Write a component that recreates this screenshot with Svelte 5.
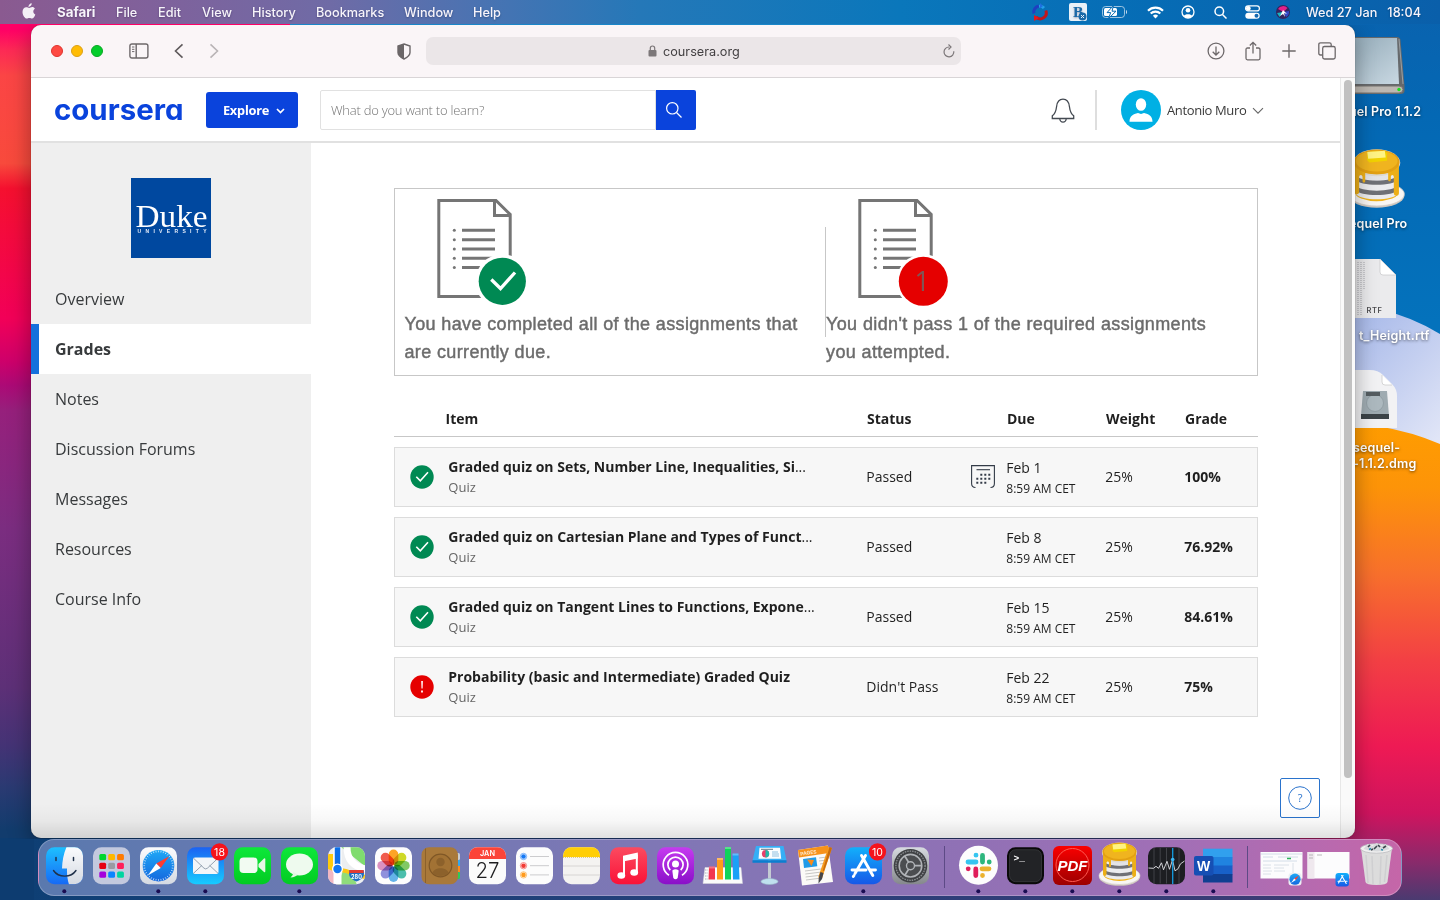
<script>
  const menus = [
    { label: 'Safari', w: 59, bold: true },
    { label: 'File', w: 42 },
    { label: 'Edit', w: 44 },
    { label: 'View', w: 50 },
    { label: 'History', w: 64 },
    { label: 'Bookmarks', w: 88 },
    { label: 'Window', w: 69 },
    { label: 'Help', w: 40 }
  ];
  const nav = ['Overview', 'Grades', 'Notes', 'Discussion Forums', 'Messages', 'Resources', 'Course Info'];
  const rows = [
    { title: 'Graded quiz on Sets, Number Line, Inequalities, Si', cut: true, ok: true, status: 'Passed', due: 'Feb 1', grade: '100%', cal: true },
    { title: 'Graded quiz on Cartesian Plane and Types of Funct', cut: true, ok: true, status: 'Passed', due: 'Feb 8', grade: '76.92%' },
    { title: 'Graded quiz on Tangent Lines to Functions, Expone', cut: true, ok: true, status: 'Passed', due: 'Feb 15', grade: '84.61%' },
    { title: 'Probability (basic and Intermediate) Graded Quiz', cut: false, ok: false, status: "Didn't Pass", due: 'Feb 22', grade: '75%' }
  ];
  const dock = [
    'finder', 'launchpad', 'safari', 'mail', 'facetime', 'messages', 'maps', 'photos', 'contacts', 'calendar',
    'reminders', 'notes', 'music', 'podcasts', 'numbers', 'keynote', 'pages', 'appstore', 'settings', 'sep',
    'slack', 'terminal', 'pdf', 'sequel', 'stocks', 'word', 'sep', 'win1', 'win2', 'trash'
  ];
  const running = ['finder', 'safari', 'mail', 'messages', 'appstore', 'slack', 'terminal', 'pdf', 'sequel', 'stocks', 'word'];
  const padColors = ['#00d62f', '#ffb800', '#ff7a00', '#e60012', '#9a9aa2', '#ff1f5a', '#a400dc', '#0a84ff', '#00d5a0'];
  const petals = ['#ff9500', '#c8d400', '#6cc24a', '#2bb5a0', '#4aa8e8', '#7d7fd8', '#d77fb8', '#f0402f'];
  const ticks = Array.from({ length: 36 }, (_, i) => i * 10);
</script>

{#snippet pancakes()}
  <ellipse cx="23.500" cy="37.800" rx="20.500" ry="9" fill="#cdc6be" />
  <ellipse cx="23.500" cy="36.700" rx="20.500" ry="8.800" fill="#f8f6f3" stroke="#d5cfc8" stroke-width=".6" />
  <path d="M8 33q-2 5 4 7 11 4 23 0 6-2 4-7z" fill="#f0b31a" />
  <path d="M8 14h31v22c-2 6-29 6-31 0z" fill="#ececee" />
  <path d="M8 22.500c2 5.500 29 5.500 31 0v3.200c-2 5.500-29 5.500-31 0z" fill="#707176" />
  <path d="M8 30c2 5.500 29 5.500 31 0v3.200c-2 5.500-29 5.500-31 0z" fill="#707176" />
  <path d="M13 20h21v5q-10 3-21 0z" fill="#e3e3e6" />
  <ellipse cx="23.500" cy="13.500" rx="17.500" ry="10" fill="#dcd8d2" />
  <path d="M7 13v22c0 2.500 3.500 2.500 3.500 0V24c0-2 2.500-2 2.500 0v3c0 1.500 2 1.500 2 0v-6q9 2 17 0v5c0 1.500 2 1.500 2 0v-2c0-2 2.200-2 2.200 0v12c0 2.500 3.800 2.500 3.800 0V13z" fill="#edaf17" />
  <ellipse cx="23.500" cy="12.800" rx="17" ry="9.200" fill="#e3a013" />
  <ellipse cx="23.500" cy="12.200" rx="15.500" ry="7.800" fill="#f0b41f" />
  <path d="M16.500 5.500l13-1 1.700 1.500v6l-13 1.200-1.700-1.500z" fill="#f2d200" />
  <path d="M16.500 5.500l13-1 .7 5-13 1z" fill="#fff384" />
{/snippet}

{#snippet compass(cx, cy, r)}
  <circle {cx} {cy} {r} fill="url(#gSaf)" />
  {#each ticks as a}
    <line x1={cx} y1={cy - r + 0.6} x2={cx} y2={cy - r + 2.4} stroke="#fff" stroke-width=".6" transform="rotate({a} {cx} {cy})" />
  {/each}
  <path d="M{cx + r * 0.68} {cy - r * 0.6}L{cx - r * 0.14} {cy - r * 0.14}L{cx + r * 0.14} {cy + r * 0.14}z" fill="#ff3b30" />
  <path d="M{cx - r * 0.68} {cy + r * 0.62}L{cx - r * 0.14} {cy - r * 0.14}L{cx + r * 0.14} {cy + r * 0.14}z" fill="#fff" />
{/snippet}

{#snippet docIcon()}
  <g fill="none" stroke="#757575" stroke-width="3">
    <path d="M1.800 1.500H59L73.200 15.500V97.500H1.800z" />
    <path d="M57.500 1.500V16.500H73" />
    <path d="M25 31.300h33M25 40.700h33M25 50h33M25 59.300h33M25 68.600h33" />
  </g>
  {#each [31.300, 40.700, 50, 59.300, 68.600] as y}
    <circle cx="17.300" cy={y} r="1.500" fill="#757575" />
  {/each}
{/snippet}

<div class="desktop">
  <svg class="wall" width="1440" height="900" viewBox="0 0 1440 900" aria-hidden="true">
    <defs>
      <linearGradient id="wl" x1="0" y1="0" x2="0" y2="1">
        <stop offset=".035" stop-color="#ff0066" /><stop offset=".06" stop-color="#fd2a55" /><stop offset=".09" stop-color="#fb4545" />
        <stop offset=".195" stop-color="#f84a3c" /><stop offset=".225" stop-color="#f5102f" /><stop offset=".38" stop-color="#f20058" />
        <stop offset=".43" stop-color="#cf006a" /><stop offset=".46" stop-color="#ac0a76" /><stop offset=".49" stop-color="#96207c" />
        <stop offset=".63" stop-color="#7b2d80" /><stop offset=".82" stop-color="#5d3077" /><stop offset=".89" stop-color="#443375" />
        <stop offset=".94" stop-color="#2a3a72" /><stop offset=".99" stop-color="#123c6d" />
      </linearGradient>
      <linearGradient id="wr" x1="0" y1="0" x2="0" y2="1">
        <stop offset="0" stop-color="#0a62ae" /><stop offset=".25" stop-color="#0468b4" /><stop offset=".7" stop-color="#0472bc" />
      </linearGradient>
      <linearGradient id="wo" x1="0" y1="0" x2="0" y2="1">
        <stop offset="0" stop-color="#ff9d00" /><stop offset=".14" stop-color="#fd9408" /><stop offset=".32" stop-color="#f8702c" />
        <stop offset=".5" stop-color="#f34044" /><stop offset=".68" stop-color="#ee1a54" /><stop offset=".82" stop-color="#cf145f" />
        <stop offset=".92" stop-color="#8a2a6b" /><stop offset="1" stop-color="#4a3a70" />
      </linearGradient>
      <linearGradient id="wp" x1="0" y1="0" x2="1" y2="1">
        <stop offset="0" stop-color="#93a9e4" /><stop offset="1" stop-color="#e4e8f8" />
      </linearGradient>
      <linearGradient id="wb" x1="0" y1="0" x2="1" y2="0">
        <stop offset="0" stop-color="#0d3f74" /><stop offset=".5" stop-color="#26407a" /><stop offset=".85" stop-color="#383c76" /><stop offset="1" stop-color="#4a3a70" />
      </linearGradient>
    </defs>
    <rect width="1440" height="900" fill="url(#wb)" />
    <rect width="290" height="838" fill="url(#wl)" />
    <rect y="838" width="34" height="62" fill="#0d3c70" />
    <rect x="290" width="1000" height="60" fill="#1a86c8" />
    <rect x="1290" width="150" height="460" fill="url(#wr)" />
    <path d="M1300 300Q1385 300 1440 334V450H1300z" fill="url(#wp)" />
    <path d="M1300 420Q1385 420 1440 444V900H1300z" fill="url(#wo)" />
  </svg>

  <header class="menubar">
    <svg class="apple" width="14" height="17" viewBox="0 0 14 17">
      <path fill="#f4f0f6" d="M9.700.2c.1 1-.3 1.900-.9 2.600-.6.700-1.400 1.100-2.300 1.100-.1-.9.300-1.900.9-2.500C8 .7 8.900.3 9.700.2zM12.900 5.800c-1 .6-1.600 1.600-1.600 2.700 0 1.300.8 2.400 2 2.900-.6 1.900-1.900 4.200-3.300 4.200-.9 0-1.400-.6-2.600-.6s-1.700.6-2.500.6C3.300 15.600.5 12.500.5 8.900c0-2.900 1.800-4.700 3.800-4.700 1.200 0 2 .7 2.900.7.800 0 1.700-.8 3.100-.8 1 0 2 .6 2.600 1.700z" />
    </svg>
    <nav class="menus">
      {#each menus as m}<span class:bold={m.bold} style:width="{m.w}px">{m.label}</span>{/each}
    </nav>
    <div class="tray">
      <svg width="18" height="18" viewBox="0 0 18 18" fill="none" stroke-width="3">
        <path d="M3 10.500A6 6 0 0 1 8 3" stroke="#1f3fc0" /><path d="M8 3.200A6 6 0 0 1 13 5" stroke="#23a0e8" />
        <path d="M14.800 7.500A6 6 0 0 1 5 14" stroke="#c1161c" /><path d="M3 12v6l5-3z" fill="#e5161c" stroke="none" /><path d="M9 0v5.500L12 3z" fill="#1f6fe0" stroke="none" />
      </svg>
      <svg width="18" height="18" viewBox="0 0 18 18">
        <rect width="18" height="18" rx="2" fill="#e9f1f8" />
        <text x="4" y="14" font-family="Liberation Serif" font-weight="700" font-size="15.500" fill="#1b6aa8">B</text>
        <circle cx="13.500" cy="13.500" r="4" fill="#1b6aa8" /><path d="M12 12l3 3m0-3l-3 3" stroke="#e9f1f8" />
      </svg>
      <svg width="26" height="12" viewBox="0 0 26 12">
        <rect x=".5" y=".5" width="22" height="11" rx="3" fill="none" stroke="#cfe0ef" stroke-opacity=".75" />
        <path d="M24 4v4c1.300-.4 1.300-3.600 0-4z" fill="#cfe0ef" />
        <rect x="2" y="2" width="13" height="8" rx="1.500" fill="#fff" />
        <path d="M11.500-.5L5 6.600h3.700L6.500 12.500l7.500-7.300h-4z" fill="#fff" stroke="#0a6cb3" stroke-width="1" />
      </svg>
      <svg width="17" height="13" viewBox="0 0 17 13" fill="none" stroke="#fff" stroke-width="2.100">
        <path d="M1 4.800a10.500 10.500 0 0 1 15 0M3.700 7.600a6.800 6.800 0 0 1 9.600 0" /><path d="M5.900 9.700a3.700 3.700 0 0 1 5.200 0L8.500 12.500z" fill="#fff" stroke="none" />
      </svg>
      <svg width="14" height="14" viewBox="0 0 14 14" fill="#fff">
        <circle cx="7" cy="7" r="6" fill="none" stroke="#fff" stroke-width="1.300" /><circle cx="7" cy="5.300" r="2.300" /><path d="M2.800 11c1-2.500 7.400-2.500 8.400 0a5.500 5.500 0 0 1-8.400 0z" />
      </svg>
      <svg width="13" height="13" viewBox="0 0 13 13" fill="none" stroke="#fff" stroke-width="1.500"><circle cx="5.300" cy="5.300" r="4.300" /><path d="M8.500 8.500l4 4" /></svg>
      <svg width="15" height="14" viewBox="0 0 15 14">
        <rect x=".6" y=".9" width="13.800" height="5" rx="2.500" fill="none" stroke="#fff" stroke-width="1.200" /><circle cx="3.300" cy="3.400" r="2.400" fill="#fff" />
        <rect x=".3" y="7.800" width="14.400" height="6" rx="3" fill="#fff" /><circle cx="11.500" cy="10.800" r="2" fill="#1569b0" />
      </svg>
      <svg width="14" height="14" viewBox="0 0 14 14">
        <circle cx="7" cy="7" r="7" fill="#33245e" /><path d="M2 4a6 6 0 0 1 9.500-1L7.500 7z" fill="#e0218a" /><path d="M7.500 7L13 6a6 6 0 0 1-3 6z" fill="#3048c8" />
        <path d="M1 8l6-1-3.500 5z" fill="#18b4c0" /><path d="M7 5l4 4-3-1 1 4-2-3-3 2 2-4z" fill="#fff" />
      </svg>
    </div>
    <span class="clock">Wed 27 Jan<span class="time">18:04</span></span>
  </header>

  <section class="files">
    <div class="file">
      <svg width="60" height="60" viewBox="1345 37 60 60">
        <defs><linearGradient id="hd" x1="0" y1="0" x2="1" y2="1"><stop offset="0" stop-color="#8ea6b4" /><stop offset="1" stop-color="#c9d8e2" /></linearGradient></defs>
        <path d="M1340 37h57q3 0 3.500 3l4 46v5q0 3-4 3h-60z" fill="#66696c" />
        <path d="M1340 38h57l2 46h-59z" fill="url(#hd)" /><path d="M1399 39l4 45" stroke="#a9adb0" stroke-width=".8" />
        <path d="M1340 86h59q4 0 4 3.500t-4 3.500h-59z" fill="#bdb8b2" stroke="#77736f" /><circle cx="1399" cy="89.500" r="1.700" fill="#1de01d" />
      </svg>
      <span class="w1">uel Pro 1.1.2</span>
    </div>
    <div class="file">
      <svg width="60" height="60" viewBox="0 2.500 44.500 44.500">{@render pancakes()}</svg>
      <span class="w2">equel Pro</span>
    </div>
    <div class="file">
      <svg width="60" height="60" viewBox="1345 259 60 60">
        <path d="M1345 259h35l16 16v43h-51z" fill="#ebebed" /><path d="M1380 259l16 16h-13q-3 0-3-3z" fill="#fff" stroke="#c5c5c8" stroke-width=".7" />
        <path d="M1358 262v54M1361 262v54M1364 262v28" stroke="#c2c2c6" stroke-width="1.600" stroke-dasharray="1 1" />
        <text x="1366.500" y="313" font-family="Inter" font-weight="600" font-size="7.500" letter-spacing=".6" fill="#4c4c4f">RTF</text>
      </svg>
      <span class="w3">t_Height.rtf</span>
    </div>
    <div class="file">
      <svg width="60" height="60" viewBox="1345 370 60 60">
        <path d="M1345 370h25q8 0 13 5l9 9q5 5 5 12v32h-52z" fill="#f2f2f4" /><path d="M1382 375v7q0 3 3 3h7" fill="#fff" stroke="#ccc" stroke-width=".8" />
        <path d="M1363 391h24l2 25-1 3h-26l-1-3z" fill="#9fabb1" /><path d="M1361 414h28v5h-28z" fill="#3c4347" /><circle cx="1375" cy="403" r="8.500" fill="#adb9bf" stroke="#93a0a6" /><rect x="1366" y="392" width="14" height="4" fill="#555d61" />
      </svg>
      <span class="w4">sequel-<br />-1.1.2.dmg</span>
    </div>
  </section>

  <main class="window">
    <div class="toolbar">
      <div class="lights"><i class="r"></i><i class="y"></i><i class="g"></i></div>
      <svg class="sb" width="20" height="16" viewBox="0 0 20 16" fill="none" stroke="#6d686a" stroke-width="1.400">
        <rect x=".9" y="1" width="18" height="14" rx="2" /><path d="M7.200 1v14" /><path d="M3 4h2.400M3 6.300h2.400M3 8.600h2.400" stroke-width="1" />
      </svg>
      <svg class="bk" width="10" height="16" viewBox="0 0 10 16" fill="none" stroke="#5f5a5c" stroke-width="1.600"><path d="M8.500 1.300L1.500 8l7 6.700" /></svg>
      <svg class="fw" width="10" height="16" viewBox="0 0 10 16" fill="none" stroke="#b9b4b6" stroke-width="1.600"><path d="M1.500 1.300L8.500 8l-7 6.700" /></svg>
      <svg class="sh" width="14" height="17" viewBox="0 0 14 17"><path d="M7 1l6 2v6.500c0 3-3.500 5.300-6 6.500-2.500-1.200-6-3.500-6-6.500V3z" fill="none" stroke="#6b6668" stroke-width="1.400" /><path d="M7 1v15c-2.500-1.200-6-3.500-6-6.500V3z" fill="#6b6668" /></svg>
      <div class="url">
        <svg width="9" height="12" viewBox="0 0 9 12"><rect x=".5" y="5" width="8" height="6.500" rx="1" fill="#7c7779" /><path d="M2.300 5V3.200a2.200 2.200 0 0 1 4.400 0V5" fill="none" stroke="#7c7779" stroke-width="1.200" /></svg>
        <span>coursera.org</span>
        <svg class="reload" width="12" height="14" viewBox="0 0 12 14" fill="none" stroke="#7c7779" stroke-width="1.200"><path d="M10.800 7.300A4.900 4.900 0 1 1 6.200 3" /><path d="M5.500.5L8 3 5.500 5.500" /></svg>
      </div>
      <svg class="dl" width="18" height="18" viewBox="0 0 18 18" fill="none" stroke="#6d686a" stroke-width="1.300"><circle cx="9" cy="9" r="7.900" /><path d="M9 4.500v8.300M5.700 9.700L9 13l3.300-3.300" /></svg>
      <svg class="share" width="16" height="20" viewBox="0 0 16 20" fill="none" stroke="#6d686a" stroke-width="1.300"><path d="M5 7H2.500Q1 7 1 8.500v8.800q0 1.500 1.500 1.500h11q1.500 0 1.500-1.500V8.500Q15 7 13.500 7H11" /><path d="M8 12.500V1.500M4.800 4.500L8 1.300l3.200 3.200" /></svg>
      <svg class="plus" width="14" height="14" viewBox="0 0 14 14" stroke="#6d686a" stroke-width="1.400"><path d="M7 .3v13.400M.3 7h13.400" /></svg>
      <svg class="tabs" width="18" height="18" viewBox="0 0 18 18" fill="none" stroke="#6d686a" stroke-width="1.300"><path d="M4.500 13H2.500Q.8 13 .8 11.300V2.500Q.8.800 2.500.800h9q1.700 0 1.700 1.700v1.800" /><rect x="4.700" y="4.500" width="12.500" height="12.500" rx="1.800" /></svg>
    </div>

    <div class="page">
      <div class="content">
        <div class="top">
          <svg class="brand" width="128" height="30" viewBox="0 0 128 30"><text x="-1" y="25.500" textLength="129.500" lengthAdjust="spacingAndGlyphs">coursera</text></svg>
          <button class="explore">Explore<svg width="9" height="6" viewBox="0 0 9 6" fill="none" stroke="#fff" stroke-width="1.700"><path d="M1 1l3.500 3.500L8 1" /></svg></button>
          <div class="search"><span>What do you want to learn?</span></div>
          <button class="go"><svg width="18" height="18" viewBox="0 0 18 18" fill="none" stroke="#fff" stroke-width="1.200"><circle cx="7.300" cy="7.300" r="5.700" /><path d="M11.500 11.500l5 5" /></svg></button>
          <svg class="bell" width="24" height="26" viewBox="0 0 24 26" fill="none" stroke="#444a52" stroke-width="1.300"><path d="M1.300 20.500v-2.700C4 16 5 13.500 5.600 8.500 6.200 3.500 8.500 1.200 12 1.200s5.800 2.300 6.400 7.300c.6 5 1.600 7.500 4.300 9.300v2.700z" /><path d="M8.800 20.500a3.200 3.700 0 0 0 6.400 0" /></svg>
          <i class="rule"></i>
          <svg class="avatar" width="40" height="40" viewBox="0 0 40 40"><circle cx="20" cy="20" r="20" fill="#00b0e4" /><ellipse cx="20" cy="14.500" rx="5.200" ry="6.300" fill="#fff" /><path d="M8.500 31.700c0-5.500 3.500-7.500 8.500-8.700l3 1 3-1c5 1.200 8.500 3.200 8.500 8.700z" fill="#fff" /></svg>
          <span class="user">Antonio Muro</span>
          <svg class="caret" width="12" height="8" viewBox="0 0 12 8" fill="none" stroke="#666" stroke-width="1.100"><path d="M1 1.200l5 5 5-5" /></svg>
        </div>

        <div class="body">
          <aside>
            <svg class="duke" width="80" height="80" viewBox="0 0 80 80">
              <rect width="80" height="80" fill="#00489f" />
              <text x="4.500" y="48.500" font-family="Liberation Serif" font-size="32" fill="#fff" textLength="72" lengthAdjust="spacingAndGlyphs">Duke</text>
              <text x="6.500" y="55.200" font-family="Liberation Sans" font-weight="700" font-size="5" fill="#e6eefa" textLength="69">UNIVERSITY</text>
            </svg>
            {#each nav as n}<a class:active={n === 'Grades'} href="#{n}">{n}</a>{/each}
          </aside>

          <section class="grades">
            <div class="summary">
              <div class="sum">
                <svg width="92" height="108" viewBox="0 0 92 108">
                  {@render docIcon()}
                  <circle cx="65.300" cy="82.300" r="27" fill="#fff" /><circle cx="65.300" cy="82.300" r="23.600" fill="#008953" />
                  <path d="M54.300 80.500l9.200 9 14.500-16" fill="none" stroke="#fff" stroke-width="3.300" />
                </svg>
                <p>You have completed all of the assignments that<br />are currently due.</p>
              </div>
              <i class="split"></i>
              <div class="sum second">
                <svg width="92" height="108" viewBox="0 0 92 108">
                  {@render docIcon()}
                  <circle cx="65.300" cy="82.300" r="27" fill="#fff" /><circle cx="65.300" cy="82.300" r="24.500" fill="#e50000" />
                  <text x="56.600" y="92.300" font-family="Open Sans" font-size="27" font-weight="400" fill="#805555">1</text>
                </svg>
                <p>You didn't pass 1 of the required assignments<br />you attempted.</p>
              </div>
            </div>

            <div class="thead"><span></span><span>Item</span><span>Status</span><span>Due</span><span>Weight</span><span>Grade</span></div>
            {#each rows as r}
              <div class="row">
                <svg width="24" height="24" viewBox="0 0 24 24">
                  <circle cx="12" cy="12" r="11.700" fill={r.ok ? '#008953' : '#e50000'} />
                  {#if r.ok}<path d="M6.300 11.800l4 4 7.700-8.500" fill="none" stroke="#fff" stroke-width="1.600" />{:else}<path d="M11.200 6h1.700l-.3 7.500h-1.100zM11.100 15.500h1.800v1.900h-1.800z" fill="#fff" />{/if}
                </svg>
                <div class="item"><b>{r.title}{#if r.cut}<span>...</span>{/if}</b><small>Quiz</small></div>
                <span class="cell">{r.status}</span>
                <span class="cal">
                  {#if r.cal}
                    <svg width="24" height="24" viewBox="0 0 24 24" fill="none" stroke="#333b47" stroke-width="1.100">
                      <path d="M4.500 22.500C1.800 22.500.6 21 .6 18.500V.6h22.800v17.900c0 2.500-1.200 4-3.900 4" /><path d="M5.500 4.700h13.500" />
                      <g stroke-width="2" stroke-dasharray="2 2"><path d="M9.300 9.800h10" /><path d="M5.300 13.800h14" /><path d="M5.300 17.800h10" /></g>
                    </svg>
                  {/if}
                </span>
                <div class="due"><span>{r.due}</span><small>8:59 AM CET</small></div>
                <span class="cell">25%</span>
                <strong class="cell">{r.grade}</strong>
              </div>
            {/each}
          </section>
        </div>
      </div>
      <div class="scroll"><i></i></div>
    </div>
    <button class="help"><svg width="24" height="24" viewBox="0 0 24 24"><circle cx="12" cy="12" r="11.300" fill="none" stroke="#2a73cc" stroke-width="1" /><text x="12" y="16" text-anchor="middle" font-family="Open Sans" font-size="11" fill="#2a73cc">?</text></svg></button>
    <div class="fade"></div>
  </main>

  <footer class="dock">
    {#each dock as d}
      {#if d === 'sep'}
        <i class="sep"></i>
      {:else}
        <svg width="47" height="56" viewBox="0 0 47 56">
          {#if d === 'finder'}
            <defs>
              <linearGradient id="gF" x2="0" y2="1"><stop stop-color="#1ec0ff" /><stop offset="1" stop-color="#1668f5" /></linearGradient>
              <linearGradient id="gW" x2="0" y2="1"><stop stop-color="#fafbfd" /><stop offset="1" stop-color="#d5dae2" /></linearGradient>
              <linearGradient id="gSaf" x2="0" y2="1"><stop stop-color="#1fa8f6" /><stop offset="1" stop-color="#1468de" /></linearGradient>
              <linearGradient id="gM" x2="0" y2="1"><stop stop-color="#1c62f2" /><stop offset="1" stop-color="#16ccff" /></linearGradient>
              <linearGradient id="gG" x2="0" y2="1"><stop stop-color="#0de83a" /><stop offset="1" stop-color="#02cb22" /></linearGradient>
              <linearGradient id="gMu" x2="0" y2="1"><stop stop-color="#fb4b60" /><stop offset="1" stop-color="#fa1238" /></linearGradient>
              <linearGradient id="gP" x2="0" y2="1"><stop stop-color="#c63bf0" /><stop offset="1" stop-color="#8a10c8" /></linearGradient>
              <linearGradient id="gA" x2="0" y2="1"><stop stop-color="#12b0fb" /><stop offset="1" stop-color="#1658e8" /></linearGradient>
              <linearGradient id="gS" x2="0" y2="1"><stop stop-color="#d7dbe0" /><stop offset="1" stop-color="#85888c" /></linearGradient>
              <linearGradient id="gR" x2="0" y2="1"><stop stop-color="#fb0000" /><stop offset="1" stop-color="#9c0000" /></linearGradient>
              <clipPath id="tile"><rect x="5" y="8.200" width="37" height="37" rx="8.500" /></clipPath>
            </defs>
            <g clip-path="url(#tile)">
              <rect x="5" y="8" width="38" height="38" fill="url(#gF)" />
              <path d="M25.500 8C22.500 15 21.300 22 21 29.500h5c-.2 6 .5 11 2 16h15V8z" fill="url(#gW)" />
            </g>
            <path d="M12.500 31.500c5 7.500 17.500 7.500 22.500 0" fill="none" stroke="#20314a" stroke-width="1.400" stroke-linecap="round" />
            <path d="M15 18.500v3M32.500 18.500v3" stroke="#20314a" stroke-width="1.500" stroke-linecap="round" />
          {:else if d === 'launchpad'}
            <rect x="5" y="8.200" width="37" height="37" rx="8.500" fill="#c3c9de" />
            {#each padColors as c, i}<rect x={11.300 + (i % 3) * 8.900} y={15 + Math.floor(i / 3) * 8.800} width="6.800" height="6.200" rx="1.500" fill={c} />{/each}
          {:else if d === 'safari'}
            <rect x="5" y="8.200" width="37" height="37" rx="8.500" fill="url(#gW)" />
            {@render compass(23.5, 26.7, 15.8)}
          {:else if d === 'mail'}
            <rect x="5" y="8.200" width="37" height="37" rx="8.500" fill="url(#gM)" />
            <rect x="11" y="18.500" width="25.500" height="16.500" rx="2" fill="#f2f5f8" />
            <path d="M11.500 19.200l10.500 10q1.700 1.500 3.400 0l10.600-10M11.500 34.300l8.500-8M36 34.300l-8.500-8" fill="none" stroke="#8b98a8" stroke-width=".9" />
            <circle cx="37.500" cy="12.800" r="8.600" fill="#f5131b" /><text x="37.500" y="16.600" text-anchor="middle" font-family="Inter" font-size="10.500" fill="#fff">18</text>
          {:else if d === 'facetime'}
            <rect x="5" y="8.200" width="37" height="37" rx="8.500" fill="url(#gG)" />
            <rect x="10.500" y="18.500" width="18" height="15.500" rx="4" fill="#f2fbf2" /><path d="M29.500 25l5.500-5.500q1.300-.7 1.300.8v12q0 1.500-1.300.8L29.500 28z" fill="#e6f7e6" />
          {:else if d === 'messages'}
            <rect x="5" y="8.200" width="37" height="37" rx="8.500" fill="url(#gG)" />
            <ellipse cx="23.500" cy="25.500" rx="13.500" ry="11" fill="#eefaee" /><path d="M17 33c.3 2.500-.8 4-2.500 5.500 3.500 0 6-1.500 7.500-3z" fill="#e4f5e4" />
          {:else if d === 'maps'}
            <g clip-path="url(#tile)">
              <rect x="5" y="8" width="38" height="38" fill="#eceef0" />
              <path d="M18 8h25v20z" fill="#7fdc6e" /><path d="M5 13l12 33H5z" fill="#f2b7c2" /><path d="M5 15h5v17l-5-2z" fill="#ffcb0b" />
              <path d="M14 46l7-16 9 6 4 10z" fill="#8fdc7b" /><path d="M24 8c0 14 8 20 19 22" fill="none" stroke="#fff" stroke-width="7" />
              <path d="M18 31c9 1 14 6 25 7" fill="none" stroke="#fbc614" stroke-width="4" /><path d="M14.500 8v38" stroke="#fff" stroke-width="8" /><path d="M14.500 8v21" stroke="#0d6fe8" stroke-width="5.500" />
            </g>
            <circle cx="14.500" cy="30" r="5.500" fill="#fff" /><circle cx="14.500" cy="30" r="4.200" fill="#1277f2" />
            <path d="M26.500 31h14c1.500 5 0 9-7 11.500-7-2.500-8.500-6.500-7-11.500z" fill="#1f6fc4" /><path d="M26.500 31h14l.3 3H26.200z" fill="#e23c35" /><text x="33.500" y="39.500" text-anchor="middle" font-family="Inter" font-size="5.500" font-weight="700" fill="#fff">280</text>
          {:else if d === 'photos'}
            <rect x="5" y="8.200" width="37" height="37" rx="8.500" fill="#fdfdfd" />
            {#each petals as c, i}<rect class="petal" x="18.700" y="10.500" width="9.600" height="15.500" rx="4.800" fill={c} transform="rotate({i * 45} 23.500 26.700)" />{/each}
          {:else if d === 'contacts'}
            <rect x="36" y="14" width="7" height="7" rx="1.500" fill="#c9cdd2" /><rect x="36" y="21" width="7" height="6" fill="#35a7ec" /><rect x="36" y="27" width="7" height="6" fill="#ff8a1c" /><rect x="36" y="33" width="7" height="7" rx="1.500" fill="#2ecc55" />
            <rect x="4.500" y="8.200" width="36.500" height="37" rx="7.500" fill="#a9793a" /><path d="M8.500 9.500v34.500" stroke="#8c612b" stroke-width="1" />
            <circle cx="23.500" cy="26.500" r="11.300" fill="#a27234" stroke="#7f5726" stroke-width="1.200" /><circle cx="23.500" cy="23" r="4.200" fill="#8c612b" /><path d="M15.500 34c1-6.500 15-6.500 16 0-4 4-12 4-16 0z" fill="#8c612b" />
          {:else if d === 'calendar'}
            <g clip-path="url(#tile)"><rect x="5" y="8" width="38" height="38" fill="#fbfbfb" /><rect x="5" y="8" width="38" height="12" fill="#fb4438" /></g>
            <text x="23.500" y="17" text-anchor="middle" font-family="Inter" font-weight="600" font-size="7.300" fill="#fff">JAN</text>
            <text x="23.500" y="39" text-anchor="middle" font-family="Inter" font-weight="300" font-size="22" fill="#1d1d1f" textLength="24" lengthAdjust="spacingAndGlyphs">27</text>
          {:else if d === 'reminders'}
            <rect x="5" y="8.200" width="37" height="37" rx="8.500" fill="#fcfcfc" />
            {#each ['#1579f5', '#f23a34', '#ff9a1c'] as c, i}
              <circle cx="12.500" cy={17.500 + i * 9.200} r="3.200" fill="none" stroke={c} stroke-opacity=".55" /><circle cx="12.500" cy={17.500 + i * 9.200} r="2.300" fill={c} />
              <path d="M19 {17.500 + i * 9.200}h19" stroke="#c6c6c8" stroke-width=".9" />
            {/each}
          {:else if d === 'notes'}
            <g clip-path="url(#tile)"><rect x="5" y="8" width="38" height="38" fill="#f4f3f1" /><rect x="5" y="8" width="38" height="10" fill="#ffce06" /><path d="M5 27h38M5 36h38" stroke="#d4d3d0" stroke-width=".9" /><path d="M5 18.500h38" stroke="#cfae42" stroke-width=".6" stroke-dasharray="1 1" /></g>
          {:else if d === 'music'}
            <rect x="5" y="8.200" width="37" height="37" rx="8.500" fill="url(#gMu)" />
            <path d="M19 37V19.500L31.800 16.700V33.500" fill="none" stroke="#fff" stroke-width="2" /><path d="M18 16.800l14.800-3.300v6L18 22.500z" fill="#fff" /><ellipse cx="16.300" cy="36.500" rx="3.900" ry="3.200" fill="#fff" /><ellipse cx="29.200" cy="33.500" rx="3.900" ry="3.200" fill="#fff" />
          {:else if d === 'podcasts'}
            <rect x="5" y="8.200" width="37" height="37" rx="8.500" fill="url(#gP)" />
            <g fill="none" stroke="#fff" stroke-width="1.700"><path d="M17 36.200a12.300 12.300 0 1 1 13 0" /><path d="M18.300 31.200a7.600 7.600 0 1 1 10.400 0" /></g>
            <circle cx="23.500" cy="25" r="3.500" fill="#fff" /><path d="M20.300 31.500q3.200-2.500 6.400 0l-1 7.500q-2.200 2.500-4.400 0z" fill="#fff" />
          {:else if d === 'numbers'}
            <path d="M6 28.500h36l1.500 16H4z" fill="#fbfbfb" stroke="#d8d8dc" stroke-width=".5" /><path d="M6.500 30.500v12M8 30.500v12" stroke="#99a" stroke-width=".8" stroke-dasharray="1 2" />
            <path d="M10 27.500h6v13h-6.500z" fill="#f2364f" /><path d="M18 19h6v21.500h-6z" fill="#ff9d1a" /><path d="M26 8h6v32.500h-6z" fill="#0fd35a" /><path d="M33.500 14.500h6l1 26h-6.500z" fill="#1ba1f7" />
            <path d="M10 27.500h6v2h-6zM18 19h6v2h-6zM26 8h6v2h-6zM33.500 14.500h6v2h-6z" fill="#fff" opacity=".3" />
          {:else if d === 'keynote'}
            <rect x="22" y="21" width="3" height="21" fill="#c4cbd3" /><ellipse cx="23.500" cy="42.500" rx="8.500" ry="3" fill="#bfe0ee" stroke="#9ab8ca" stroke-width=".6" />
            <path d="M10 7h27.500l3 14.500H6.500z" fill="#35aef6" /><path d="M6.500 21.300h34v2.400h-34z" fill="#0a7fd0" /><path d="M13.500 8.700h20.500l1.200 11H12.500z" fill="#fbfdff" /><circle cx="19.500" cy="14.700" r="3.700" fill="#e83f6c" /><path d="M19.500 14.700V11a3.700 3.700 0 0 1 0 7.400z" fill="#22b8a8" /><path d="M26 13h6M26 15h7M26 17h7" stroke="#8fc0e0" /><path d="M15 10.300h12" stroke="#456" stroke-width=".8" />
          {:else if d === 'pages'}
            <path d="M5 11l30-4.500 5 36.500-31 3.500z" fill="#fbfaf7" /><path d="M5 11l30-4.500 1 7.500L6 18.500z" fill="#f7921a" />
            <text x="7.500" y="16.800" font-family="Inter" font-weight="700" font-size="5" fill="#fde7c8" transform="rotate(-8 7 17)">PAGES</text>
            <path d="M10 20l13-1.700 1.300 9L11 29z" fill="#1f9be8" /><path d="M14 20.500l7 .5-2.500 6z" fill="#f58b1c" /><path d="M26 19l8-1M26 22l8-1M27 25l6-1M12 32l20-2.500M12.300 35l18-2.200M12.600 38l17-2M13 41l14-1.800" stroke="#b9b9b6" stroke-width=".8" />
            <path d="M35.500 8l3.500 1-10 30.500-3 .8-.5-3z" fill="#f59a1d" /><path d="M36.500 8l2.500 1-8 23-1.200-.4z" fill="#c96c0b" /><path d="M27.500 33l3 1-1.500 6-3.500 4.500.2-5.500z" fill="#44454a" />
          {:else if d === 'appstore'}
            <rect x="5" y="8.200" width="37" height="37" rx="8.500" fill="url(#gA)" />
            <g stroke="#fff" stroke-width="2.900" stroke-linecap="round"><path d="M25.500 16.500L15 34.500M21.500 16.500l11.300 20M12 31h14M31 31h4.500M14 36.500l-.7 1" /></g>
            <circle cx="37.500" cy="12.800" r="8.600" fill="#f5131b" /><text x="37.500" y="16.600" text-anchor="middle" font-family="Inter" font-size="10.500" fill="#fff">10</text>
          {:else if d === 'settings'}
            <rect x="5" y="8.200" width="37" height="37" rx="8.500" fill="url(#gS)" />
            <circle cx="23.500" cy="26.700" r="16.800" fill="#3f4144" /><circle cx="23.500" cy="26.700" r="14.600" fill="none" stroke="#8d9094" stroke-width="1.300" stroke-dasharray="1.500 1" />
            <circle cx="23.500" cy="26.700" r="11.300" fill="#4b4d50" stroke="#b0b3b7" stroke-width="1.600" />
            <circle cx="23.500" cy="26.700" r="4" fill="none" stroke="#b0b3b7" stroke-width="1.400" /><path d="M27.500 26.700H34M21.600 23.200l-3.700-6M21.600 30.200l-3.700 6" stroke="#b0b3b7" stroke-width="1.700" />
          {:else if d === 'slack'}
            <circle cx="23.500" cy="26.200" r="19.500" fill="#fdfdfd" />
            <g stroke-width="4.800" stroke-linecap="round">
              <path d="M21 16.200h.01M13 23h8" stroke="#36c5f0" /><path d="M27.500 16.500v6.500M34.200 23h.01" stroke="#2eb67d" /><path d="M27 29.800h7M27.500 36.500h.01" stroke="#ecb22e" /><path d="M20.800 30v6.500M13.200 29.800h.01" stroke="#e01e5a" />
            </g>
          {:else if d === 'terminal'}
            <rect x="5" y="8.200" width="37" height="37" rx="8.500" fill="#0a0a0a" /><rect x="7.500" y="10.700" width="32" height="32" rx="6" fill="#222326" stroke="#45464a" stroke-width=".6" />
            <text x="11.500" y="21.500" font-family="Liberation Mono" font-weight="700" font-size="9.500" fill="#fff">&gt;_</text>
          {:else if d === 'pdf'}
            <rect x="4" y="7" width="39" height="39" rx="6" fill="url(#gR)" /><circle cx="23.500" cy="26" r="16.500" fill="none" stroke="#ff5b52" stroke-width="1" />
            <text x="23.500" y="32" text-anchor="middle" font-family="Liberation Sans" font-style="italic" font-weight="700" font-size="15.500" fill="#fff" textLength="30" lengthAdjust="spacingAndGlyphs">PDF</text>
          {:else if d === 'sequel'}
            {@render pancakes()}
          {:else if d === 'stocks'}
            <rect x="5" y="8.200" width="37" height="37" rx="8.500" fill="#1d1e22" /><path d="M11 9v35.500M17.200 9v35.500M23.500 9v35.500M36 9v35.500" stroke="#505258" stroke-width=".7" />
            <path d="M5.500 29l5 .3 2.500-2 2.500 2 3-5.500 2 7 3.500-8.500 2.500 8 3-9.500 2.500 11 3-2 2.500-5L41.500 22" fill="none" stroke="#e2e2e6" stroke-width=".9" /><path d="M29.700 9v36" stroke="#139de2" stroke-width="1.300" /><circle cx="29.700" cy="20.500" r="1.800" fill="#3bb8f5" />
          {:else if d === 'word'}
            <rect x="13" y="9.700" width="29.500" height="9" fill="#31a0ee" /><rect x="13" y="18" width="29.500" height="9" fill="#2083e0" /><rect x="13" y="26.500" width="29.500" height="9" fill="#1860c8" /><rect x="13" y="35" width="29.500" height="8.500" fill="#103f91" />
            <rect x="4" y="17" width="19.500" height="19.500" rx="2" fill="#164fb4" /><text x="13.700" y="31.500" text-anchor="middle" font-family="Liberation Sans" font-weight="700" font-size="14" fill="#fff">W</text>
          {:else if d === 'win1' || d === 'win2'}
            <rect x="2.500" y="13" width="42" height="26.500" fill="#fcfcfd" />
            {#if d === 'win1'}
              <path d="M3 15h41M5 18h10M20 18h20M5 22h34" stroke="#c9d6e2" stroke-width=".8" /><path d="M29 19.500h4" stroke="#2fb45d" stroke-width="1.500" /><path d="M5 26h8M5 29h8M5 32h9M5 35h8M16 26h15M16 29h10M16 32h11M35 24v12" stroke="#d3dbe2" stroke-width=".8" />
              <rect x="30.500" y="34" width="13" height="12.500" rx="3" fill="#eceff3" /><circle cx="37" cy="40.200" r="5.600" fill="url(#gSaf)" /><path d="M41 36.500l-4.800 2.900 1.600 1.600z" fill="#ff3b30" /><path d="M33 44l3.200-4.600 1.600 1.600z" fill="#fff" />
            {:else}
              <rect x="2.500" y="13" width="7" height="26.500" fill="#efe8ee" /><path d="M4 16h4M4 19h4M12 16h5" stroke="#aaa" stroke-width=".8" />
              <rect x="30.500" y="34" width="13.500" height="13.500" rx="3" fill="url(#gA)" /><path d="M38 36.500l-4.500 7.500M36.600 36.500l4.600 8M33 42.300h5.500M40 42.300h2" stroke="#fff" stroke-width="1.100" stroke-linecap="round" />
            {/if}
          {:else if d === 'trash'}
            <path d="M9 9h31l-4.500 34q-.5 3-11 3t-11-3z" fill="#dcdcdc" /><path d="M14 16l2 28M20 17l1 28M29 17l-1 28M35 16l-2.500 27" stroke="#cfcfd1" stroke-width="1.500" />
            <ellipse cx="24.500" cy="9.500" rx="16" ry="4.700" fill="#f1f1f1" stroke="#bdbdc0" stroke-width=".8" /><path d="M11.500 10l4-5 5 2 4-3 5 3 4-2 4 5q-12 5-26 0z" fill="#d8dadd" /><path d="M16 8l2-2M22 10l3-3M31 9l3-2M26 6l2 2M19 11l2-1" stroke="#3c464d" stroke-width="1.600" /><path d="M29 10.500l2 .5M17 10.500l2-1" stroke="#2b8fae" stroke-width="1.400" />
          {/if}
          {#if running.includes(d)}<circle cx="23.300" cy="52.300" r="2" fill="#1a0d52" />{/if}
        </svg>
      {/if}
    {/each}
  </footer>
</div>

<style>
  :global(body) { margin: 0; overflow: hidden; }
  .desktop { position: relative; width: 1440px; height: 900px; overflow: hidden; font-family: 'Open Sans', sans-serif; }
  .desktop *, .desktop { box-sizing: border-box; }
  svg { flex: none; display: block; }
  button { border: 0; padding: 0; margin: 0; }
  .wall { position: absolute; inset: 0; }

  .menubar { position: relative; display: flex; align-items: center; height: 24px; padding-left: 22px; color: #f7f4fa; font: 500 12.7px/25px Inter, sans-serif;
    background: linear-gradient(90deg, #8a5a90 0, #80619b 150px, #6f6ba6 330px, #4a73b2 480px, #2578b8 640px, #0a77bb 900px, #066cb5 1150px, #0a5faa 1440px); text-shadow: 0 1px 2px rgba(0, 0, 40, .3); }
  .apple { margin-bottom: 1px; }
  .menus { display: flex; padding-left: 21px; white-space: nowrap; }
  .bold { font-weight: 700; font-size: 13.300px; }
  .tray { display: grid; grid-template-columns: 38px 38px 36px 44px 22px 42px 22px 40px; place-items: center; margin-left: 508px; height: 24px; }
  .clock { margin-left: 3px; white-space: pre; }
  .time { margin-left: 10px; }

  .files { position: absolute; left: 1345px; top: 37px; width: 95px; display: grid; grid-template-rows: 111px 111px 111px 111px; }
  .file { display: flex; flex-direction: column; align-items: flex-start; gap: 7px; }
  .file:nth-child(n + 2) { gap: 8px; } .file:nth-child(n + 3) { gap: 9px; } .file:nth-child(4) { gap: 10px; }
  .file span { color: #fff; font: 600 12.500px/16px Inter, sans-serif; letter-spacing: .15px; text-shadow: 0 1px 3px rgba(0, 0, 0, .6); white-space: nowrap; }
  .w1 { margin-left: 4px; } .w2 { margin-left: 4px; } .w3 { margin-left: 14px; } .w4 { margin-left: 8px; }

  .window { position: absolute; left: 31px; top: 25px; width: 1324px; height: 813px; border-radius: 10px; overflow: hidden; background: #fff; display: flex; flex-direction: column; }
  .desktop::after { content: ''; position: absolute; left: 31px; top: 25px; width: 1324px; height: 813px; border-radius: 10px; pointer-events: none; box-shadow: 0 0 1px rgba(0, 0, 0, .5), 0 8px 22px rgba(0, 0, 0, .35); clip-path: inset(0 -50px -1px -50px); }
  .toolbar { display: flex; align-items: center; height: 53px; flex: none; padding-left: 20px; background: #faf5f7; border-bottom: 1px solid #d9d5d7; }
  .lights { display: flex; gap: 8px; }
  .lights i { width: 12px; height: 12px; border-radius: 50%; }
  .r { background: #fe4a43; border: 1px solid #e0332e; } .y { background: #ffbc05; border: 1px solid #dda015; } .g { background: #04cd2b; border: 1px solid #08a823; }
  .sb { margin-left: 25.500px; } .bk { margin-left: 25.500px; } .fw { margin-left: 25px; } .sh { margin-left: 178px; }
  .url { display: flex; align-items: center; width: 535px; height: 28px; margin-left: 15px; padding-left: 222px; border-radius: 7px; background: #ebe6e8; }
  .url span { margin-left: 6px; color: #434042; font: 400 12.700px/29px Inter, sans-serif; }
  .reload { margin: 0 6px 0 auto; }
  .dl { margin-left: 245.500px; } .share { margin-left: 20px; } .plus { margin-left: 21px; } .tabs { margin-left: 22px; }

  .page { flex: 1; display: flex; min-height: 0; }
  .content { flex: 1; display: flex; flex-direction: column; }
  .top { display: flex; align-items: center; height: 65px; padding: 0 0 0 24px; border-bottom: 2px solid #e1e1e1; flex: none; }
  .brand { overflow: visible; margin-bottom: 2px; }
  .brand text { font: 700 28.500px Inter, sans-serif; font-feature-settings: 'cv11'; fill: #0a43dc; }
  .explore { display: flex; align-items: center; justify-content: center; gap: 7px; width: 92px; height: 36px; margin-left: 23px; padding-left: 4px; border-radius: 3px; background: #0a43dc; color: #fff; font: 700 12.800px 'Noto Sans', sans-serif; letter-spacing: -.2px; }
  .explore svg { margin-top: 2px; }
  .search { display: flex; align-items: center; width: 336px; height: 40px; margin-left: 22px; padding-left: 10px; border: 1px solid #e1e1e1; border-radius: 2px 0 0 2px; color: #747474; font-size: 13px; letter-spacing: -.24px; font-weight: 300; }
  .go { display: grid; place-items: center start; width: 40px; height: 40px; padding-left: 9px; background: #0a43dc; border-radius: 0 2px 2px 0; }
  .bell { margin: 3px 0 0 355px; }
  .rule { width: 2px; height: 40px; margin-left: 20px; background: #dedede; }
  .avatar { margin-left: 24px; }
  .user { width: 79px; margin: 0 6px; color: #3a3a3a; font-size: 13px; letter-spacing: -.38px; white-space: nowrap; }
  .caret { margin-top: 2px; }

  .body { flex: 1; display: flex; }
  aside { width: 280px; padding-top: 35px; background: #efefef; display: flex; flex-direction: column; }
  .duke { margin: 0 0 16px 100px; }
  aside a { height: 50px; padding-left: 24px; color: #373a3c; font-size: 16px; line-height: 50px; text-decoration: none; }
  aside a.active { padding-left: 16px; border-left: 8px solid #1570dc; background: #fff; font-weight: 700; }

  .grades { width: 864px; margin: 45px 0 0 83px; color: #1f1f1f; font-size: 14px; }
  .summary { display: flex; height: 188px; border: 1px solid #c7c7c7; }
  .sum { width: 430px; padding: 10px 0 0 9.500px; }
  .sum svg { margin-left: 32.500px; }
  .sum.second { padding-left: 1px; }
  .sum.second svg { margin-left: 32px; }
  .sum p { margin: 3px 0 0; color: #6c6c6c; font: 400 18px/28px 'Liberation Sans', sans-serif; letter-spacing: .36px; -webkit-text-stroke: .45px #6c6c6c; white-space: nowrap; }
  .sum.second p { letter-spacing: .38px; }
  .split { width: 1px; height: 110px; margin-top: 38px; background: #c7c7c7; margin-right: -1px; }
  .thead { display: grid; grid-template-columns: 51.500px 421.500px 140px 99px 79px 1fr; align-items: center; height: 36px; margin-top: 25px; border-bottom: 1px solid #c7c7c7; font-weight: 700; }
  .row { display: grid; grid-template-columns: 53.300px 418px 104.700px 35.300px 99px 79px 1fr; align-items: center; height: 60px; margin-top: 10px; border: 1px solid #dcdcdc; background: #f7f7f7; }
  .row > svg { margin-left: 15px; }
  .item, .due { display: flex; flex-direction: column; white-space: nowrap; }
  .item b { line-height: 20px; } .item b span { font-weight: 400; }
  .item small { color: #666; font-size: 13px; line-height: 20px; }
  .cell { padding-bottom: 2px; }
  .due { padding-top: 2px; line-height: 20px; }
  .due small { font-size: 12px; line-height: 21px; }

  .scroll { width: 15px; padding: 2px 0 0 3px; border-left: 1px solid #e8e8e8; background: #fafafa; }
  .scroll i { display: block; width: 8px; height: 698px; border-radius: 4px; background: #c1c1c1; }
  .help { position: absolute; right: 35px; bottom: 20px; width: 40px; height: 40px; display: grid; place-items: center; background: #fff; border: 1px solid #2a73cc; border-radius: 2px; }
  .fade { position: absolute; left: 0; right: 0; bottom: 0; height: 34px; background: linear-gradient(rgba(0, 0, 0, 0), rgba(0, 0, 0, .03) 50%, rgba(0, 0, 0, .12)); }

  .dock { position: absolute; left: 38px; top: 839px; display: flex; width: 1364px; height: 57px; padding-left: 2.500px; border-radius: 16px; border: 1px solid rgba(255, 255, 255, .25);
    background: linear-gradient(90deg, #5a79ae, #6f79b3 25%, #7f77b5 45%, #9071b5 68%, #a26fb6 84%, #ba69ae 95%, #c566a8); }
  .dock svg { overflow: visible; margin: -1px 0 0 0; }
  .dock svg:first-child { margin-left: -1px; }
  .sep { width: 1px; height: 42px; margin: 6px 10px 0; background: #5d4a86; }
  .petal { mix-blend-mode: multiply; opacity: .85; }
</style>
